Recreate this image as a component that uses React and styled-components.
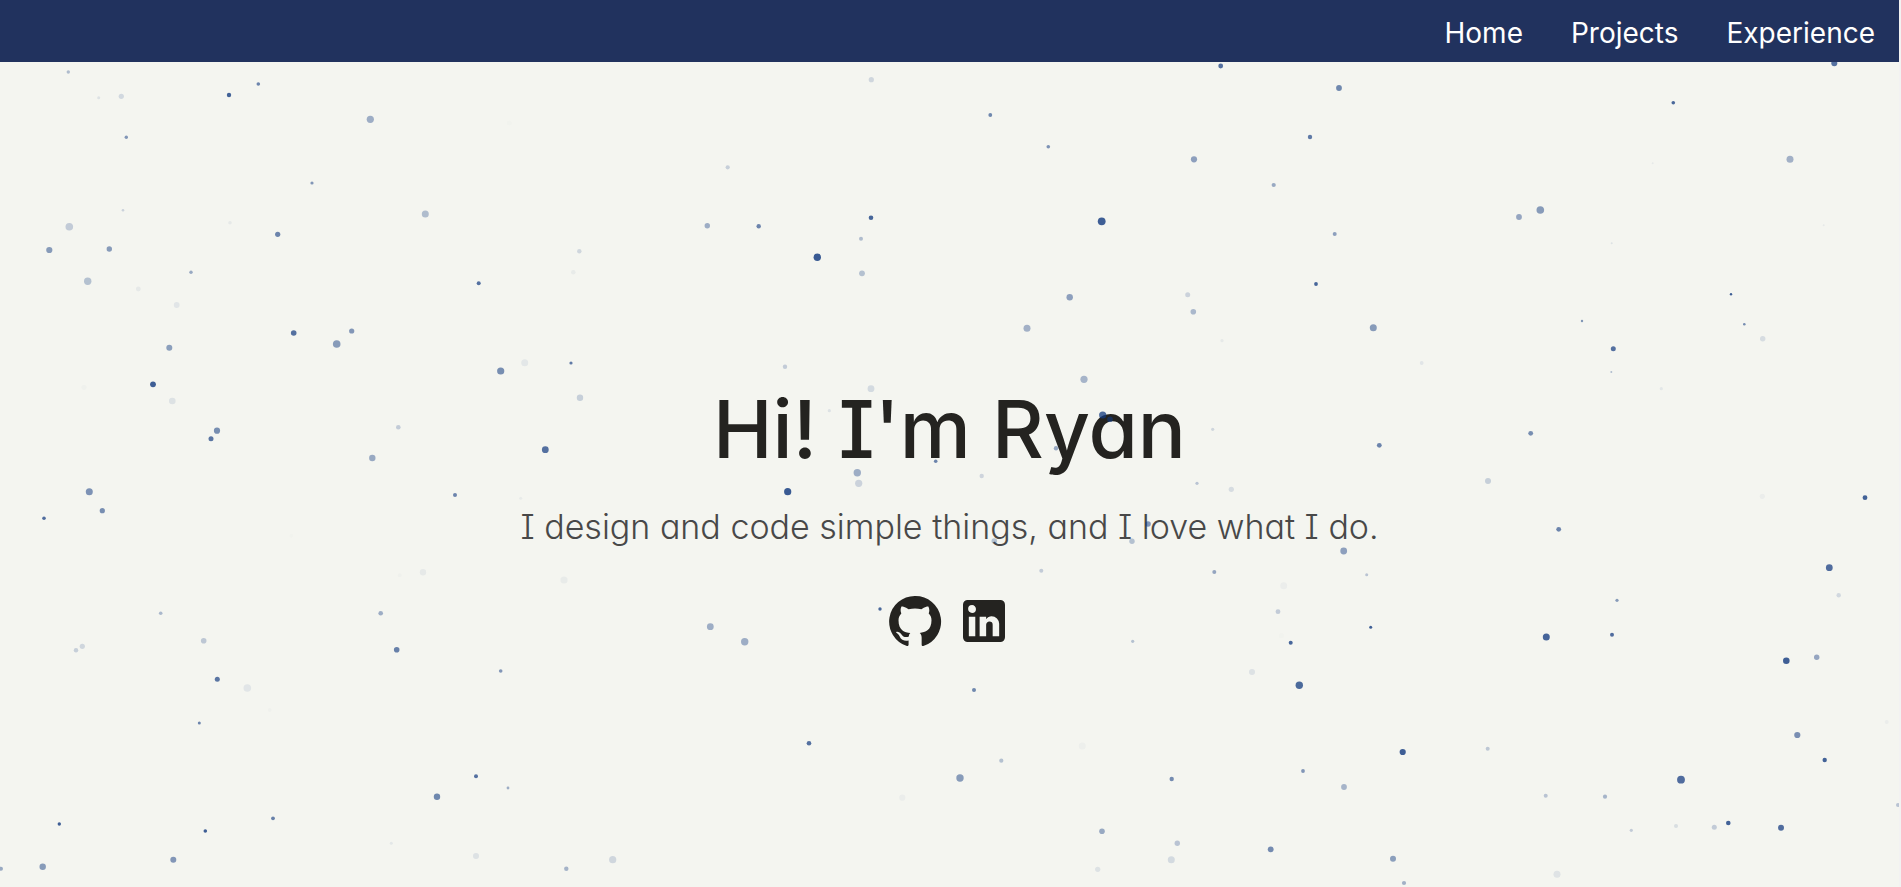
import React from "react";
import styled, { createGlobalStyle } from "styled-components";

const GlobalStyle = createGlobalStyle`
  * { box-sizing: border-box; }
  body {
    margin: 0;
    background: #f2f2f2;
    font-family: Inter, "Noto Sans", sans-serif;
    font-feature-settings: "cv08", "cv11";
  }
`;

const Page = styled.div`
  display: flex;
  flex-direction: column;
  min-height: 100vh;
  margin-right: 2px;
  background: #f4f5f0;
`;

const NavBar = styled.nav`
  position: relative;
  z-index: 2;
  display: flex;
  justify-content: flex-end;
  align-items: center;
  gap: 48px;
  height: 62px;
  padding: 4px 24px 0 0;
  background: #21325e;
`;

const NavLink = styled.a`
  color: #fff;
  font-size: 28px;
  font-weight: 400;
  line-height: 40px;
  text-decoration: none;
`;

const Hero = styled.main`
  position: relative;
  flex: 1;
  display: flex;
  flex-direction: column;
  justify-content: center;
  align-items: center;
  padding-top: 72px;
`;

const Title = styled.h1`
  margin: 0;
  color: #242320;
  font-size: 80px;
  font-weight: 500;
  line-height: 112px;
`;

const Tagline = styled.p`
  margin: 18px 0 0;
  color: #484848;
  font-size: 34px;
  font-weight: 300;
  line-height: 48px;
`;

const Socials = styled.div`
  display: flex;
  gap: 13px;
  margin-top: 42px;
`;

const SocialLink = styled.a`
  display: flex;
  color: #242320;
`;

const SocialIcon = styled.svg`
  width: 56px;
  height: 56px;
  fill: currentColor;
`;

const Sky = styled.svg`
  position: absolute;
  inset: 0;
  z-index: 1;
  width: 100%;
  height: 100%;
  pointer-events: none;
  fill: #10387e;
`;

const NAV_HEIGHT = 62;

const LINKS = ["Home", "Projects", "Experience"];

const SOCIALS = [
  {
    name: "GitHub",
    href: "https://github.com",
    path: "M12 1.27a11 11 0 00-3.48 21.46c.55.09.73-.28.73-.55v-1.84c-3.03.64-3.67-1.46-3.67-1.46-.55-1.29-1.28-1.65-1.28-1.65-.92-.65.1-.65.1-.65 1.1 0 1.73 1.1 1.73 1.1.92 1.65 2.57 1.2 3.21.92a2 2 0 01.64-1.47c-2.47-.27-5.04-1.19-5.04-5.5 0-1.1.46-2.1 1.2-2.84a3.76 3.76 0 010-2.93s.91-.28 3.11 1.1c1.8-.49 3.7-.49 5.5 0 2.1-1.38 3.02-1.1 3.02-1.1a3.76 3.76 0 01.1 2.93c.83.74 1.2 1.74 1.2 2.94 0 4.21-2.57 5.13-5.04 5.4.45.37.82.92.82 2.02v3.03c0 .27.1.64.73.55A11 11 0 0012 1.27",
  },
  {
    name: "LinkedIn",
    href: "https://www.linkedin.com",
    path: "M19 3a2 2 0 0 1 2 2v14a2 2 0 0 1-2 2H5a2 2 0 0 1-2-2V5a2 2 0 0 1 2-2h14m-.5 15.5v-5.3a3.26 3.26 0 0 0-3.26-3.26c-.85 0-1.84.52-2.32 1.3v-1.11h-2.79v8.37h2.79v-4.93c0-.77.62-1.4 1.39-1.4a1.4 1.4 0 0 1 1.4 1.4v4.93h2.79M6.88 8.56a1.68 1.68 0 0 0 1.68-1.68c0-.93-.75-1.69-1.68-1.69a1.69 1.69 0 0 0-1.69 1.69c0 .93.76 1.68 1.69 1.68m1.39 9.94v-8.37H5.5v8.37h2.77z",
  },
];

// Each particle: x, y (from the top of the page), radius, opacity
const PARTICLES = [
  [68.3, 72, 1.7, 0.3], [98.7, 97.7, 1.5, 0.1], [121.3, 96.3, 2.6, 0.15], [229, 95, 2.2, 0.78],
  [258.3, 84, 1.8, 0.6], [370.3, 119.3, 3.6, 0.38], [126.3, 137.3, 1.7, 0.5], [312, 183, 1.6, 0.5],
  [123, 210.3, 1.3, 0.18], [425.3, 214, 3.5, 0.3], [230, 222.7, 1.8, 0.06], [69.3, 226.7, 3.8, 0.22],
  [277.7, 234.3, 2.6, 0.6], [49.3, 250, 3.1, 0.48], [109.3, 249, 2.7, 0.48], [191, 272.3, 1.7, 0.4],
  [87.7, 281.3, 3.7, 0.28], [138.3, 289, 2.4, 0.06], [478.7, 283.3, 2, 0.7], [176.7, 305, 2.9, 0.08],
  [293.7, 333, 2.8, 0.7], [351.7, 331, 2.6, 0.5], [336.7, 344, 3.8, 0.48], [169.3, 347.7, 3, 0.46],
  [153, 384.3, 2.9, 0.8], [84, 387.3, 2.6, 0.02], [172.3, 401, 3.3, 0.1], [217, 430.7, 3.1, 0.55],
  [211, 438.7, 2.5, 0.68], [398.3, 427.3, 2.3, 0.22], [372.3, 458, 3.2, 0.4],
  [871.3, 79.7, 2.6, 0.16], [509.3, 123, 2.5, 0.01], [727.7, 167.3, 2.1, 0.2], [707.3, 225.7, 2.7, 0.38],
  [758.7, 226.3, 2.2, 0.6], [871, 217.7, 2.3, 0.76], [861, 238.7, 2, 0.3], [579.3, 251.3, 2.2, 0.16],
  [817.3, 257.3, 3.7, 0.82], [573.3, 272.3, 2.3, 0.05], [862, 273.3, 2.9, 0.28], [524.7, 362.7, 3.5, 0.07],
  [571, 363, 1.6, 0.65], [500.7, 371, 3.6, 0.55], [785, 366.7, 2.2, 0.22], [580, 397.7, 3.2, 0.2],
  [871, 388.7, 3.4, 0.14], [829.3, 410.7, 1.6, 0.1], [545.3, 449.7, 3.4, 0.7], [935.7, 461.3, 1.8, 0.6],
  [1220.7, 66, 2.4, 0.7], [1339, 88, 2.9, 0.58], [990.3, 115, 1.9, 0.58], [1310, 137, 2.2, 0.65],
  [1048.3, 146.7, 1.8, 0.52], [1194, 159.3, 3.1, 0.45], [1273.7, 185, 2.1, 0.4], [1101.7, 221.3, 3.9, 0.8],
  [1334.7, 234, 2, 0.45], [1316, 284, 1.9, 0.76], [1069.7, 297.3, 3.2, 0.45], [1187.7, 294.7, 2.5, 0.18],
  [1193.3, 311.7, 2.8, 0.32], [1027, 328.3, 3.5, 0.36], [1373.3, 327.7, 3.5, 0.48], [1222, 340.7, 1.6, 0.06],
  [1421.7, 363, 1.9, 0.08], [1084, 379.3, 3.6, 0.34], [1102.7, 415, 3.6, 0.75], [1110, 419.3, 2.8, 0.6],
  [1056, 448.3, 2.2, 0.4], [1212.7, 429.3, 1.6, 0.16], [1379.3, 445.3, 2.4, 0.6],
  [1834.3, 63.3, 3, 0.7], [1673.3, 102.7, 1.8, 0.75], [1790, 159.3, 3.5, 0.36], [1652.7, 163.3, 1, 0.06],
  [1540.3, 210, 3.8, 0.48], [1519, 217, 2.9, 0.42], [1823.7, 225.3, 1, 0.06], [1611.7, 243.3, 1, 0.1],
  [1731, 294.3, 1.2, 0.8], [1582, 321, 1.2, 0.5], [1744.3, 324.3, 1.3, 0.55], [1762.7, 338.7, 2.7, 0.13],
  [1613.3, 348.7, 2.5, 0.7], [1611.3, 372, 1, 0.3], [1661.3, 388.7, 1.6, 0.07], [1530.7, 433.3, 2.4, 0.55],
  [1488, 481, 3, 0.2], [1762.3, 496.3, 2.6, 0.04], [1865, 497.7, 2.4, 0.78],
  [89.3, 491.7, 3.5, 0.52], [455, 495, 2, 0.6], [102.3, 510.7, 2.6, 0.55], [44, 518.3, 1.8, 0.72],
  [291.3, 535.7, 2, 0.01], [423, 572.3, 3.2, 0.06], [399.7, 575.3, 2, 0.02], [160.7, 613.3, 1.8, 0.32],
  [380.7, 613.3, 2.3, 0.38], [203.7, 640.7, 2.8, 0.24], [396.7, 649.7, 2.8, 0.62], [82.3, 646.3, 2.6, 0.16],
  [76, 650.3, 2.2, 0.2], [217.3, 679.3, 2.5, 0.68], [247.3, 688, 3.8, 0.08], [269.7, 710, 2, 0.02],
  [199.3, 723, 1.5, 0.6], [476, 776.3, 2, 0.7], [437, 796.7, 3.2, 0.58], [273, 818.3, 1.9, 0.62],
  [59.3, 824, 1.7, 0.8], [205.3, 831, 1.8, 0.8], [391.3, 843.3, 1.5, 0.07], [173.3, 859.7, 3, 0.5],
  [42.7, 866.7, 3.2, 0.48], [476, 856, 3, 0.1], [1, 868.7, 2, 0.4],
  [857.3, 472.7, 3.7, 0.38], [858.7, 483.3, 3.6, 0.18], [787.7, 491.7, 3.6, 0.82], [520.7, 498.3, 1.5, 0.05],
  [564, 580, 3.6, 0.05], [880, 609, 1.7, 0.75], [710.3, 626.7, 3.4, 0.38], [744.7, 641.7, 3.7, 0.38],
  [500.7, 671, 1.8, 0.5], [809, 743.3, 2.3, 0.7], [508, 788, 1.4, 0.38], [960, 778, 3.7, 0.48],
  [902.3, 797.7, 3.1, 0.04], [612.7, 859.7, 3.6, 0.16], [566.3, 868.7, 2.2, 0.35],
  [981.7, 476, 2.2, 0.17], [1197, 483.3, 1.6, 0.26], [1231.3, 489.3, 2.6, 0.13], [1148, 524, 2.8, 0.5],
  [994.3, 541, 2.8, 0.28], [1132, 541.3, 2.7, 0.28], [1343.7, 551, 3.4, 0.45], [1041.3, 570.7, 2, 0.22],
  [1214.3, 572, 2, 0.42], [1366.7, 574.7, 1.5, 0.26], [1283.7, 585.7, 3.5, 0.04], [1278, 611.7, 2.4, 0.22],
  [1370.7, 627.3, 1.5, 0.8], [1281.3, 635.7, 2.6, 0.01], [1132.7, 641.3, 1.6, 0.28], [1290.7, 642.7, 2, 0.76],
  [1252, 672, 3, 0.1], [1299.3, 685.3, 3.7, 0.74], [974, 690, 2, 0.58], [1082.3, 746, 3.5, 0.03],
  [1402.7, 752, 3.1, 0.8], [1001.3, 760.7, 2.1, 0.28], [1303, 771, 1.9, 0.5], [1171.7, 779, 2.2, 0.56],
  [1344, 787, 2.9, 0.34], [1102, 831.3, 2.8, 0.4], [1177.3, 843.3, 2.7, 0.26], [1270.7, 849.3, 2.9, 0.56],
  [1171.3, 859.7, 3.5, 0.14], [1393, 858.7, 3, 0.46], [1097.7, 869.3, 2.6, 0.1], [1404, 883, 2.1, 0.36],
  [1558.7, 529.3, 2.4, 0.6], [1829.3, 567.7, 3.4, 0.72], [1838.7, 595.3, 2.2, 0.15], [1617, 600.3, 1.6, 0.48],
  [1546.3, 637, 3.5, 0.77], [1612, 634.7, 2, 0.72], [1816.7, 657.3, 2.7, 0.42], [1786.3, 660.7, 3.3, 0.8],
  [1886.7, 722, 2, 0.04], [1797.3, 735, 3.1, 0.54], [1487.7, 748.7, 2, 0.24], [1824.7, 760, 2.2, 0.78],
  [1681, 779.7, 3.9, 0.72], [1545.7, 795.7, 2, 0.26], [1605, 796.7, 2.1, 0.34], [1631.3, 830.3, 1.6, 0.22],
  [1676, 826, 2, 0.12], [1714.3, 827.3, 2.5, 0.22], [1728.3, 823, 2.3, 0.78], [1781, 827.7, 3, 0.72],
  [1557, 874.3, 3.5, 0.09], [1898, 805, 2, 0.26],
];

function Particles() {
  return (
    <Sky aria-hidden="true">
      {PARTICLES.map(([x, y, r, opacity]) => (
        <circle key={`${x}-${y}`} cx={x} cy={y - NAV_HEIGHT} r={r} opacity={opacity} />
      ))}
    </Sky>
  );
}

export default function App() {
  return (
    <Page>
      <GlobalStyle />
      <NavBar>
        {LINKS.map((label) => (
          <NavLink key={label} href={`#${label.toLowerCase()}`}>{label}</NavLink>
        ))}
      </NavBar>
      <Hero>
        <Title>Hi! I'm Ryan</Title>
        <Tagline>I design and code simple things, and I love what I do.</Tagline>
        <Socials>
          {SOCIALS.map(({ name, href, path }) => (
            <SocialLink key={name} href={href} aria-label={name}>
              <SocialIcon viewBox="0 0 24 24"><path d={path} /></SocialIcon>
            </SocialLink>
          ))}
        </Socials>
        <Particles />
      </Hero>
    </Page>
  );
}
